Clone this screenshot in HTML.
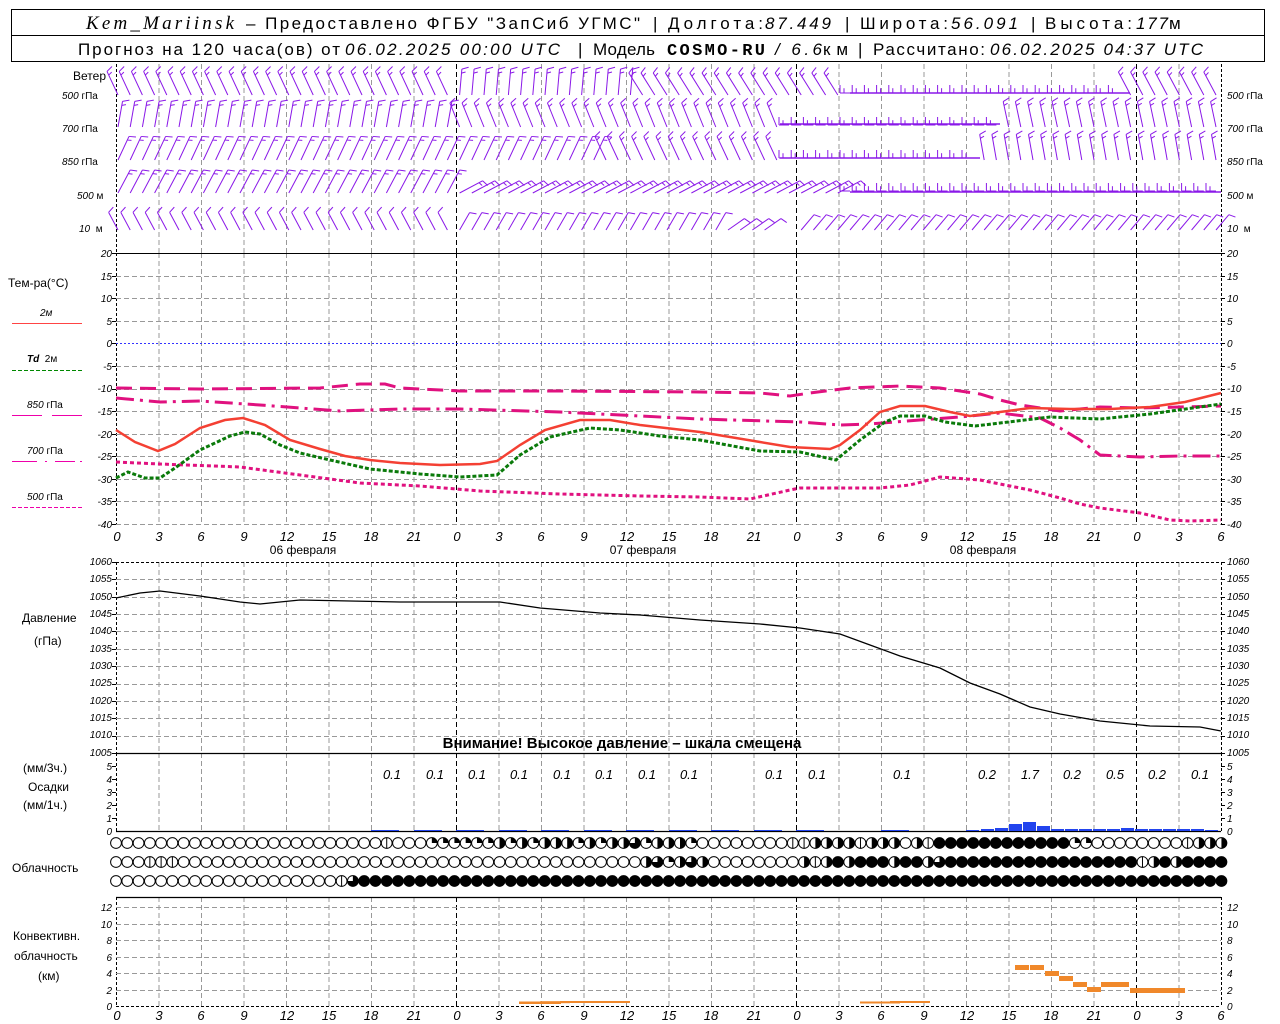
<!DOCTYPE html>
<html><head><meta charset="utf-8"><style>
html,body{margin:0;padding:0;background:#fff;width:1280px;height:1024px;overflow:hidden}
svg{display:block}
text{font-family:"Liberation Sans",sans-serif;fill:#000}
.sm{font-size:10px;font-style:italic}
.lb{font-size:12px}
.tm{font-size:13px;font-style:italic}
.hd{font-size:17px}
.it{font-style:italic}
</style></head><body>
<svg id="s" width="1280" height="1024" viewBox="0 0 1280 1024" xmlns="http://www.w3.org/2000/svg">
<g id="g"></g>
<rect x="11.5" y="9.5" width="1253" height="52" fill="none" stroke="#000"/>
<line x1="11" y1="35.5" x2="1265" y2="35.5" stroke="#000"/>
<text class="hd" x="86" y="29" style="font-family:'Liberation Serif',serif;font-style:italic;font-size:19px" textLength="148">Kem_Mariinsk</text>
<text class="hd" x="246" y="29" textLength="394">– Предоставлено ФГБУ "ЗапСиб УГМС"</text>
<text class="hd" x="653" y="29">|</text>
<text class="hd" x="668" y="29" textLength="95">Долгота:</text>
<text class="hd it" x="765" y="29" textLength="66">87.449</text>
<text class="hd" x="845" y="29">|</text>
<text class="hd" x="860" y="29" textLength="88">Широта:</text>
<text class="hd it" x="951" y="29" textLength="67">56.091</text>
<text class="hd" x="1031" y="29">|</text>
<text class="hd" x="1045" y="29" textLength="87">Высота:</text>
<text class="hd it" x="1136" y="29" textLength="32">177</text>
<text class="hd" x="1169" y="29" textLength="13">м</text>
<text class="hd" x="78" y="55" textLength="262">Прогноз на 120 часа(ов) от</text>
<text class="hd it" x="345" y="55" textLength="215">06.02.2025 00:00 UTC</text>
<text class="hd" x="578" y="55">|</text>
<text class="hd" x="593" y="55" textLength="62">Модель</text>
<text class="hd" x="667" y="55" style="font-family:'Liberation Mono',monospace;font-weight:bold" textLength="98">COSMO-RU</text>
<text class="hd it" x="775" y="55" textLength="47">/ 6.6</text>
<text class="hd" x="823" y="55" textLength="25">км</text>
<text class="hd" x="858" y="55">|</text>
<text class="hd" x="873" y="55" textLength="112">Рассчитано:</text>
<text class="hd it" x="990" y="55" textLength="213">06.02.2025 04:37 UTC</text>

<text class="lb" x="73" y="80">Ветер</text>
<text class="sm" x="62" y="99">500 <tspan font-style="normal">гПа</tspan></text>
<text class="sm" x="62" y="132">700 <tspan font-style="normal">гПа</tspan></text>
<text class="sm" x="62" y="165">850 <tspan font-style="normal">гПа</tspan></text>
<text class="sm" x="77" y="199">500 <tspan font-style="normal">м</tspan></text>
<text class="sm" x="79" y="232">10 &#160;<tspan font-style="normal">м</tspan></text>
<text class="sm" x="1227" y="99">500 <tspan font-style="normal">гПа</tspan></text>
<text class="sm" x="1227" y="132">700 <tspan font-style="normal">гПа</tspan></text>
<text class="sm" x="1227" y="165">850 <tspan font-style="normal">гПа</tspan></text>
<text class="sm" x="1227" y="199">500 <tspan font-style="normal">м</tspan></text>
<text class="sm" x="1227" y="232">10 &#160;<tspan font-style="normal">м</tspan></text>

<text class="lb" x="8" y="287">Тем-ра(°C)</text>
<text class="sm" x="40" y="316" font-style="normal">2м</text>
<text class="sm" x="27" y="362"><tspan font-weight="bold">Td</tspan> &#160;<tspan font-style="normal">2м</tspan></text>
<text class="sm" x="27" y="408">850 <tspan font-style="normal">гПа</tspan></text>
<text class="sm" x="27" y="454">700 <tspan font-style="normal">гПа</tspan></text>
<text class="sm" x="27" y="500">500 <tspan font-style="normal">гПа</tspan></text>

<g class="sm" text-anchor="end">
<text x="112" y="257">20</text><text x="112" y="280">15</text><text x="112" y="302">10</text><text x="112" y="325">5</text><text x="112" y="347">0</text><text x="112" y="370">-5</text><text x="112" y="392">-10</text><text x="112" y="415">-15</text><text x="112" y="438">-20</text><text x="112" y="460">-25</text><text x="112" y="483">-30</text><text x="112" y="505">-35</text><text x="112" y="528">-40</text>
</g>
<g class="sm">
<text x="1227" y="257">20</text><text x="1227" y="280">15</text><text x="1227" y="302">10</text><text x="1227" y="325">5</text><text x="1227" y="347">0</text><text x="1227" y="370">-5</text><text x="1227" y="392">-10</text><text x="1227" y="415">-15</text><text x="1227" y="438">-20</text><text x="1227" y="460">-25</text><text x="1227" y="483">-30</text><text x="1227" y="505">-35</text><text x="1227" y="528">-40</text>
</g>
<g class="tm" text-anchor="middle">
<text x="117" y="541">0</text><text x="159" y="541">3</text><text x="201" y="541">6</text><text x="244" y="541">9</text><text x="287" y="541">12</text><text x="329" y="541">15</text><text x="371" y="541">18</text><text x="414" y="541">21</text><text x="457" y="541">0</text><text x="499" y="541">3</text><text x="541" y="541">6</text><text x="584" y="541">9</text><text x="627" y="541">12</text><text x="669" y="541">15</text><text x="711" y="541">18</text><text x="754" y="541">21</text><text x="797" y="541">0</text><text x="839" y="541">3</text><text x="881" y="541">6</text><text x="924" y="541">9</text><text x="967" y="541">12</text><text x="1009" y="541">15</text><text x="1051" y="541">18</text><text x="1094" y="541">21</text><text x="1137" y="541">0</text><text x="1179" y="541">3</text><text x="1221" y="541">6</text>
</g>
<g class="lb" text-anchor="middle">
<text x="303" y="554">06 февраля</text><text x="643" y="554">07 февраля</text><text x="983" y="554">08 февраля</text>
</g>
<text class="lb" x="22" y="622">Давление</text>
<text class="lb" x="34" y="645">(гПа)</text>
<text x="622" y="748" text-anchor="middle" style="font-size:15px;font-weight:bold">Внимание! Высокое давление – шкала смещена</text>
<text class="lb" x="23" y="772">(мм/3ч.)</text>
<text class="lb" x="28" y="791">Осадки</text>
<text class="lb" x="23" y="809">(мм/1ч.)</text>
<g class="sm" text-anchor="end"><text x="112" y="770">5</text><text x="112" y="783">4</text><text x="112" y="796">3</text><text x="112" y="809">2</text><text x="112" y="822">1</text><text x="112" y="835">0</text></g>
<g class="sm"><text x="1227" y="770">5</text><text x="1227" y="783">4</text><text x="1227" y="796">3</text><text x="1227" y="809">2</text><text x="1227" y="822">1</text><text x="1227" y="835">0</text></g>
<g class="tm" text-anchor="middle">
<text x="392" y="779">0.1</text><text x="435" y="779">0.1</text><text x="477" y="779">0.1</text><text x="519" y="779">0.1</text><text x="562" y="779">0.1</text><text x="604" y="779">0.1</text><text x="647" y="779">0.1</text><text x="689" y="779">0.1</text><text x="774" y="779">0.1</text><text x="817" y="779">0.1</text><text x="902" y="779">0.1</text><text x="987" y="779">0.2</text><text x="1030" y="779">1.7</text><text x="1072" y="779">0.2</text><text x="1115" y="779">0.5</text><text x="1157" y="779">0.2</text><text x="1200" y="779">0.1</text>
</g>
<text class="lb" x="12" y="872">Облачность</text>
<text class="lb" x="13" y="940">Конвективн.</text>
<text class="lb" x="14" y="960">облачность</text>
<text class="lb" x="38" y="980">(км)</text>
<g class="sm" text-anchor="end"><text x="112" y="911">12</text><text x="112" y="928">10</text><text x="112" y="944">8</text><text x="112" y="961">6</text><text x="112" y="977">4</text><text x="112" y="994">2</text><text x="112" y="1010">0</text></g>
<g class="sm"><text x="1227" y="911">12</text><text x="1227" y="928">10</text><text x="1227" y="944">8</text><text x="1227" y="961">6</text><text x="1227" y="977">4</text><text x="1227" y="994">2</text><text x="1227" y="1010">0</text></g>
<g class="tm" text-anchor="middle">
<text x="117" y="1020">0</text><text x="159" y="1020">3</text><text x="201" y="1020">6</text><text x="244" y="1020">9</text><text x="287" y="1020">12</text><text x="329" y="1020">15</text><text x="371" y="1020">18</text><text x="414" y="1020">21</text><text x="457" y="1020">0</text><text x="499" y="1020">3</text><text x="541" y="1020">6</text><text x="584" y="1020">9</text><text x="627" y="1020">12</text><text x="669" y="1020">15</text><text x="711" y="1020">18</text><text x="754" y="1020">21</text><text x="797" y="1020">0</text><text x="839" y="1020">3</text><text x="881" y="1020">6</text><text x="924" y="1020">9</text><text x="967" y="1020">12</text><text x="1009" y="1020">15</text><text x="1051" y="1020">18</text><text x="1094" y="1020">21</text><text x="1137" y="1020">0</text><text x="1179" y="1020">3</text><text x="1221" y="1020">6</text>
</g>
<g class="sm" font-size="9" text-anchor="end">
<text x="112" y="565">1060</text><text x="112" y="582">1055</text><text x="112" y="600">1050</text><text x="112" y="617">1045</text><text x="112" y="634">1040</text><text x="112" y="652">1035</text><text x="112" y="669">1030</text><text x="112" y="686">1025</text><text x="112" y="704">1020</text><text x="112" y="721">1015</text><text x="112" y="738">1010</text><text x="112" y="756">1005</text>
</g>
<g class="sm" font-size="9">
<text x="1227" y="565">1060</text><text x="1227" y="582">1055</text><text x="1227" y="600">1050</text><text x="1227" y="617">1045</text><text x="1227" y="634">1040</text><text x="1227" y="652">1035</text><text x="1227" y="669">1030</text><text x="1227" y="686">1025</text><text x="1227" y="704">1020</text><text x="1227" y="721">1015</text><text x="1227" y="738">1010</text><text x="1227" y="756">1005</text>
</g>
</svg>
<script>
const NS="http://www.w3.org/2000/svg",G=document.getElementById('g');
function el(t,a){const e=document.createElementNS(NS,t);for(const k in a)e.setAttribute(k,a[k]);G.appendChild(e);return e;}
function ln(x1,y1,x2,y2,c,w,d){const a={x1,y1,x2,y2,stroke:c,'stroke-width':w||1};if(d)a['stroke-dasharray']=d;el('line',a);}
const X=h=>116+h*14.1667, L=116, R=1221;
function vgrid(y1,y2){for(let h=3;h<78;h+=3){const mid=h%24==0;ln(X(h)+.5,y1,X(h)+.5,y2,mid?'#000':'#999',1,'5,3');}
ln(L+.5,y1,L+.5,y2,'#000',1,'3,2');ln(R+.5,y1,R+.5,y2,'#000',1,'3,2');}
vgrid(64,253);vgrid(253,524);vgrid(562,753);vgrid(753,831);vgrid(897,1006);
for(let t=15;t>=-40;t-=5){const y=Math.round(253+(20-t)*4.517)+.5;if(t==0)ln(L,y,R,y,'#33f',1,'2,2');else ln(L,y,R,y,'#999',1,'5,3');}
ln(L,253.5,R,253.5,'#000',1);
for(let p=1055;p>1005;p-=5){const y=Math.round(562+(1060-p)*3.473)+.5;ln(L,y,R,y,'#999',1,'5,3');}
ln(L,562.5,R,562.5,'#000',1,'3,2');ln(L,753.5,R,753.5,'#000',1.2);
for(let v=1;v<=5;v++){ln(L-4,831-v*13+.5,L,831-v*13+.5,'#000',1);ln(R,831-v*13+.5,R+4,831-v*13+.5,'#000',1);}
ln(L,831.5,R,831.5,'#000',1.2);
for(let v=2;v<=12;v+=2){const y=Math.round(1006-v*8.25)+.5;ln(L,y,R,y,'#999',1,'5,3');}
ln(L,897.5,R,897.5,'#000',1.2);ln(L,1006.5,R,1006.5,'#000',1,'3,2');
for(let t=20;t>=-40;t-=5){const y=Math.round(253+(20-t)*4.517)+.5;ln(L-4,y,L,y,'#000');ln(R,y,R+4,y,'#000');}
for(let p=1060;p>=1005;p-=5){const y=Math.round(562+(1060-p)*3.473)+.5;ln(L-4,y,L,y,'#000');ln(R,y,R+4,y,'#000');}
function pl(pts,c,w,d){el('polyline',{points:pts.map(p=>p.join(',')).join(' '),fill:'none',stroke:c,'stroke-width':w,...(d?{'stroke-dasharray':d}:{})});}
ln(12,323.5,82,323.5,'#f44',1);ln(12,370.5,82,370.5,'#080',1,'4,2');
ln(12,415.5,42,415.5,'#e0a',1);ln(52,415.5,82,415.5,'#e0a',1);
ln(12,461.5,37,461.5,'#e0a',1);ln(45,461.5,47,461.5,'#e0a',1);ln(55,461.5,75,461.5,'#e0a',1);ln(80,461.5,82,461.5,'#e0a',1);
ln(12,507.5,82,507.5,'#e0a',1,'4,2');
pl([[116,388],[200,389],[320,388],[360,384],[385,384],[400,388],[460,391],[560,391],[700,392],[760,393],[790,396],[810,393],[850,388],[900,386],[940,388],[980,394],[1000,400],[1020,405],[1060,411],[1100,407],[1140,408],[1221,406]],'#e0117f',3,'16,8');
pl([[116,398],[160,402],[200,401],[260,405],[340,411],[400,409],[460,409],[560,412],[700,419],[800,422],[840,425],[870,424],[920,420],[960,417],[1000,413],[1040,418],[1060,428],[1080,440],[1100,455],[1140,457],[1180,456],[1221,456]],'#e0117f',3,'18,6,3,6');
pl([[116,462],[160,464],[240,467],[300,475],[360,483],[420,486],[480,491],[560,494],[640,496],[700,497],[750,499],[790,490],[800,488],[880,488],[910,485],[940,477],[980,480],[1030,490],[1060,498],[1080,504],[1100,508],[1140,513],[1170,520],[1190,521],[1221,520]],'#e0117f',3,'4,3');
pl([[116,478],[128,472],[145,478],[160,478],[175,468],[200,450],[230,436],[245,432],[260,434],[280,445],[300,453],[330,460],[370,469],[420,474],[460,477],[497,475],[520,455],[550,437],[590,428],[620,430],[660,436],[700,440],[760,451],[800,452],[836,460],[860,440],[885,422],[900,416],[925,416],[945,422],[975,426],[1000,423],[1050,417],[1100,419],[1150,414],[1221,404]],'#0a7a0a',3,'4,2');
pl([[116,430],[135,442],[158,451],[175,444],[200,428],[225,420],[243,418],[265,425],[290,440],[320,449],[345,456],[370,460],[400,463],[440,465],[480,464],[497,461],[520,445],[545,430],[580,420],[610,420],[640,425],[700,432],[760,442],[790,447],[830,449],[840,445],[860,430],[880,412],[900,406],[925,406],[950,412],[970,416],[1000,412],[1030,408],[1070,409],[1110,409],[1150,407],[1185,402],[1221,393]],'#f44033',2.5);
pl([[116,598],[140,593],[160,591],[200,596],[240,602],[260,604],[300,600],[350,601],[400,602],[500,602],[540,608],[600,613],[640,615],[700,620],[760,624],[800,628],[840,634],[870,645],[900,656],[940,668],[970,683],[1000,694],[1030,707],[1060,714],[1100,721],[1150,726],[1200,727],[1221,731]],'#000',1.3);
const pb=[[371,0.1],[414,0.1],[456,0.1],[499,0.1],[541,0.1],[584,0.1],[626,0.1],[669,0.1],[711,0.1],[754,0.1],[796,0.1],[881,0.1],[966,0.1],[981,0.25],[995,0.4],[1009,0.9],[1023,1.1],[1037,0.6],[1051,0.3],[1065,0.2],[1079,0.2],[1093,0.2],[1107,0.3],[1121,0.4],[1135,0.3],[1149,0.2],[1163,0.2],[1177,0.2],[1191,0.2],[1205,0.1]];
pb.forEach(([x,v])=>{const h=Math.max(1,Math.round(v*8));el('rect',{x,y:831-h,width:x<960?28:13,height:h,fill:'#2244ee'});});
[[519,4.4,42,0.5],[540,4.4,30,0.8],[560,1.8,70,1],[860,0,40,0.5],[890,3.8,40,1],[1015,965,14,0],[1030,965,14,0],[1045,971,14,0],[1059,976,14,0],[1073,982,14,0],[1087,987,14,0],[1101,982,14,0],[1115,982,14,0],[1130,988,55,0]].forEach(r=>{
 if(r[3]===0) el('rect',{x:r[0],y:r[1],width:r[2],height:5,fill:'#f0882a'});
 else el('rect',{x:r[0],y:1002-r[3]*1,width:r[2],height:2,fill:'#f0882a'});});
el('rect',{x:519,y:1003,width:42,height:1,fill:'#f0882a'});
const rows=[
 "000000000000000000000000v000qqqqqqhqhqhhhqhqhh3qhhhq00000000vvhhhhvhhh0hvffffffffffffqq00000000vhhhh",
 "000vvv00000000000000000000000000000000000000000h3qh3h00000000hvhfhfffhffh3fffffffffffffffffvhfhffff",
 "00000000000000000000v3fffffffffffffffffffffffffffffffffffffffffffffffffffffffffffffffffffffffffffff"];
const ys=[843,862,881];
rows.forEach((r,ri)=>{for(let i=0;i<99;i++){const c=r[i]||'f',cx=116+i*11.28,cy=ys[ri],rr=5.4;
 el('circle',{cx,cy,r:rr,fill:c=='f'?'#000':'#fff',stroke:'#000','stroke-width':1});
 if(c=='q')el('path',{d:`M${cx},${cy} L${cx},${cy-rr} A${rr},${rr} 0 0 1 ${cx+rr},${cy} Z`,fill:'#000'});
 if(c=='h')el('path',{d:`M${cx},${cy-rr} A${rr},${rr} 0 0 1 ${cx},${cy+rr} Z`,fill:'#000'});
 if(c=='3')el('path',{d:`M${cx},${cy} L${cx},${cy-rr} A${rr},${rr} 0 1 1 ${cx-rr},${cy} Z`,fill:'#000'});
 if(c=='v')ln(cx,cy-rr,cx,cy+rr,'#000',1);
}});
const P='#8a18e8';
function barb(x,yb,th,n,len,fl0,fa){len=len||22;const r=th*Math.PI/180;const ux=-Math.sin(r),uy=-Math.cos(r);
 const tx=x+ux*len,ty=yb+uy*len;ln(x,yb,tx,ty,P,1);
 const a=(fa||70)*Math.PI/180;const px=-uy,py=ux;const fx=Math.cos(a)*ux+Math.sin(a)*px,fy=Math.cos(a)*uy+Math.sin(a)*py;
 for(let k=0;k<n;k++){const bx=tx-ux*k*4,by=ty-uy*k*4;const fl=(k==n-1&&n>1)?(fl0||7)*0.6:(fl0||7);ln(bx,by,bx+fx*fl,by+fy*fl,P,1);}}
function rowAng(ri,x){
 if(ri==0){if(x<456)return 25;if(x<640)return -5;if(x<850)return 32;if(x<1130)return 90;return 28;}
 if(ri==1){if(x<456)return -10;if(x<780)return 22;if(x<1000)return 90;return 12;}
 if(ri==2){if(x<600)return -25;if(x<780)return 25;if(x<980)return 90;return 10;}
 if(ri==3){if(x<456)return -28;if(x<850)return -62;return 90;}
 if(ri==4){if(x<456)return 28;if(x<720)return -30;if(x<800)return -55;return -40;}}
const base=[95,127,160,193,230];
for(let ri=0;ri<5;ri++){for(let x=118;x<1221;x+=12.2){const th=rowAng(ri,x);let n=ri==4?1:2;
 let len=ri==4?20:26;
 if(ri==4&&x>770&&x<800)continue;
 if(th==90){barb(x,base[ri]-2,90,2,10,8,90);continue;}
 barb(x,base[ri],th,n,len);}}
ln(850,93,1130,93,P,1.5);ln(780,124,1000,124,P,1.5);ln(780,158,980,158,P,1.5);ln(850,192,1221,192,P,1.5);
</script>
</body></html>
